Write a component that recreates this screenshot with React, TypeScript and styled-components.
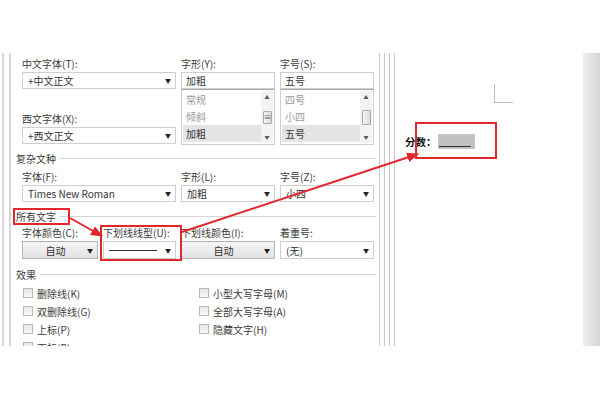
import styled, { createGlobalStyle } from "styled-components";

const GlobalStyle = createGlobalStyle`
  html, body {
    margin: 0;
    padding: 0;
    background: #fff;
  }
  body {
    font-family: "Noto Sans CJK SC", "Noto Sans", sans-serif;
    color: #333;
  }
`;

const TOP_FIELDS = { weights: ["常规", "倾斜", "加粗"], sizes: ["四号", "小四", "五号"] };

const LEFT_EFFECTS = ["删除线(K)", "双删除线(G)", "上标(P)", "下标(B)"];
const RIGHT_EFFECTS = ["小型大写字母(M)", "全部大写字母(A)", "隐藏文字(H)"];

function Arrow() {
  return <Caret>▼</Caret>;
}

function ListBox({ items, grip }: { items: string[]; grip?: boolean }) {
  return (
    <List>
      <Items>
        {items.map((item, i) => (
          <Item key={item} $selected={i === items.length - 1}>
            {item}
          </Item>
        ))}
      </Items>
      <ScrollBar>
        <ScrollArrow>▲</ScrollArrow>
        <Thumb $tall={!grip}>{grip && "≡"}</Thumb>
        <ScrollArrow>▼</ScrollArrow>
      </ScrollBar>
    </List>
  );
}

function Heading({ children, gap }: { children: string; gap: number }) {
  return (
    <SectionHead $gap={gap}>
      <span>{children}</span>
      <Rule />
    </SectionHead>
  );
}

export default function App() {
  return (
    <Page>
      <GlobalStyle />
      <Window>
        <EdgeRail />
        <Panel>
          <TopGrid>
            <Stack>
              <Label>中文字体(T):</Label>
              <Combo>
                <span>+中文正文</span>
                <Arrow />
              </Combo>
              <Label $gap={23}>西文字体(X):</Label>
              <Combo>
                <span>+西文正文</span>
                <Arrow />
              </Combo>
            </Stack>
            <Stack>
              <Label>字形(Y):</Label>
              <Input>加粗</Input>
              <ListBox items={TOP_FIELDS.weights} grip />
            </Stack>
            <Stack>
              <Label>字号(S):</Label>
              <Input>五号</Input>
              <ListBox items={TOP_FIELDS.sizes} />
            </Stack>
          </TopGrid>

          <Heading gap={7}>复杂文种</Heading>
          <ThreeGrid>
            <Stack>
              <Label $gap={6}>字体(F):</Label>
              <Combo>
                <span>Times New Roman</span>
                <Arrow />
              </Combo>
            </Stack>
            <Stack>
              <Label $gap={6}>字形(L):</Label>
              <Combo>
                <span>加粗</span>
                <Arrow />
              </Combo>
            </Stack>
            <Stack>
              <Label $gap={6}>字号(Z):</Label>
              <Combo>
                <span>小四</span>
                <Arrow />
              </Combo>
            </Stack>
          </ThreeGrid>

          <Heading gap={8}>所有文字</Heading>
          <FourGrid>
            <Stack>
              <Label>字体颜色(C):</Label>
              <Combo $button $tall>
                <Centered>自动</Centered>
                <Arrow />
              </Combo>
            </Stack>
            <Stack>
              <Label>下划线线型(U):</Label>
              <Combo $tall>
                <LineSample />
                <Arrow />
              </Combo>
            </Stack>
            <Stack>
              <Label>下划线颜色(I):</Label>
              <Combo $button $tall>
                <Centered>自动</Centered>
                <Arrow />
              </Combo>
            </Stack>
            <Stack>
              <Label>着重号:</Label>
              <Combo $tall>
                <span>(无)</span>
                <Arrow />
              </Combo>
            </Stack>
          </FourGrid>

          <Heading gap={9}>效果</Heading>
          <Effects>
            <Stack>
              {LEFT_EFFECTS.map((t) => (
                <Check key={t}>
                  <Box />
                  <span>{t}</span>
                </Check>
              ))}
            </Stack>
            <Stack>
              {RIGHT_EFFECTS.map((t) => (
                <Check key={t}>
                  <Box />
                  <span>{t}</span>
                </Check>
              ))}
            </Stack>
          </Effects>
        </Panel>
        <Divider>
          <DivLine />
          <DivLine />
          <DivLine />
          <DivLine />
        </Divider>
        <DocArea>
          <CornerMark />
          <ScoreLine>
            <strong>分数：</strong>
            <Blank>
              <BlankLine />
            </Blank>
          </ScoreLine>
        </DocArea>
        <Shade />
      </Window>

      <Overlay width="600" height="400" viewBox="0 0 600 400">
        <defs>
          <marker
            id="head"
            markerUnits="userSpaceOnUse"
            markerWidth="12"
            markerHeight="10"
            refX="11"
            refY="5"
            orient="auto"
          >
            <path d="M0,0 L12,5 L0,10 z" fill="#e1262c" />
          </marker>
        </defs>
        <g fill="none" stroke="#e1262c" strokeWidth="2">
          <rect x="14" y="209" width="55" height="15" />
          <rect x="101" y="226" width="80" height="34" />
          <rect x="416" y="123" width="80" height="35" />
          <line x1="70" y1="218" x2="102" y2="236" markerEnd="url(#head)" />
          <line x1="182" y1="232" x2="418" y2="154" markerEnd="url(#head)" />
        </g>
      </Overlay>
    </Page>
  );
}

const Page = styled.div`
  position: relative;
  width: 600px;
  height: 400px;
  padding-top: 53px;
  box-sizing: border-box;
  overflow: hidden;
  background: #fff;
`;

const Window = styled.div`
  display: flex;
  height: 293px;
  overflow: hidden;
`;

const EdgeRail = styled.div`
  flex: none;
  width: 5px;
  margin-left: 2px;
  border-left: 2px solid #d6d6d6;
  border-right: 2px solid #d6d6d6;
  margin-right: 2px;
`;

const Panel = styled.div`
  flex: none;
  width: 357px;
  padding-left: 9px;
  background: #fff;
  font-size: 10px;
  overflow: hidden;
`;

const TopGrid = styled.div`
  display: grid;
  grid-template-columns: 154px 94px 94px;
  column-gap: 5px;
  align-items: start;
`;

const ThreeGrid = styled(TopGrid)``;

const FourGrid = styled.div`
  display: grid;
  grid-template-columns: 76px 73px 94px 94px;
  column-gap: 5px;
`;

const Stack = styled.div`
  display: flex;
  flex-direction: column;
`;

const Label = styled.div<{ $gap?: number }>`
  height: 13px;
  line-height: 13px;
  margin-top: ${({ $gap }) => $gap ?? 4}px;
  margin-bottom: 2px;
  white-space: nowrap;
  color: #3a3a3a;
`;

const Combo = styled.div<{ $button?: boolean; $tall?: boolean }>`
  display: flex;
  align-items: center;
  justify-content: space-between;
  gap: 4px;
  height: ${({ $tall }) => ($tall ? 18 : 17)}px;
  box-sizing: border-box;
  padding: 0 4px 0 5px;
  border: 1px solid ${({ $button }) => ($button ? "#b3b3b3" : "#cfcfcf")};
  background: ${({ $button }) =>
    $button ? "linear-gradient(#f6f6f6, #e2e2e2)" : "#fff"};
  color: #333;
  white-space: nowrap;
`;

const Centered = styled.span`
  flex: 1;
  text-align: center;
`;

const Caret = styled.span`
  font-size: 6px;
  color: #222;
`;

const LineSample = styled.span`
  flex: 1;
  height: 1px;
  background: #333;
  margin-right: 4px;
`;

const Input = styled.div`
  height: 17px;
  line-height: 15px;
  box-sizing: border-box;
  padding-left: 4px;
  border: 1px solid #cfcfcf;
  background: #fff;
  color: #333;
`;

const List = styled.div`
  display: flex;
  height: 56px;
  box-sizing: border-box;
  border: 1px solid #cfcfcf;
  border-top-color: #a8a8a8;
  padding: 1px;
`;

const Items = styled.div`
  flex: 1;
  display: flex;
  flex-direction: column;
`;

const Item = styled.div<{ $selected?: boolean }>`
  height: 17px;
  line-height: 17px;
  padding-left: 3px;
  color: ${({ $selected }) => ($selected ? "#333" : "#9a9a9a")};
  background: ${({ $selected }) => ($selected ? "#e4e4e4" : "transparent")};
`;

const ScrollBar = styled.div`
  flex: none;
  width: 12px;
  display: flex;
  flex-direction: column;
  align-items: center;
  justify-content: space-between;
  background: #f3f3f3;
`;

const ScrollArrow = styled.span`
  font-size: 5px;
  line-height: 12px;
  color: #555;
`;

const Thumb = styled.div<{ $tall?: boolean }>`
  width: 9px;
  height: ${({ $tall }) => ($tall ? 15 : 13)}px;
  box-sizing: border-box;
  border: 1px solid #a9a9a9;
  border-radius: 1px;
  background: linear-gradient(to right, #f4f4f4, #dcdcdc);
  font-size: 8px;
  line-height: 10px;
  text-align: center;
  color: #666;
`;

const SectionHead = styled.div<{ $gap: number }>`
  display: flex;
  align-items: center;
  gap: 4px;
  height: 12px;
  margin: ${({ $gap }) => $gap}px 3px 0 -6px;
  color: #3a3a3a;
`;

const Rule = styled.div`
  flex: 1;
  height: 1px;
  background: #d4d4d4;
`;

const Effects = styled.div`
  display: grid;
  grid-template-columns: 176px 1fr;
  margin-top: 4px;
  padding-left: 1px;
`;

const Check = styled.div`
  display: flex;
  align-items: center;
  gap: 4px;
  height: 18px;
  color: #3a3a3a;
  white-space: nowrap;
`;

const Box = styled.span`
  width: 10px;
  height: 10px;
  box-sizing: border-box;
  border: 1px solid #b8b8b8;
  background: linear-gradient(#e6e6e6, #fafafa);
`;

const Divider = styled.div`
  flex: none;
  display: flex;
  gap: 4px;
  padding-right: 1px;
`;

const DivLine = styled.div`
  width: 1px;
  background: #c9c9c9;
`;

const DocArea = styled.div`
  flex: 1;
  display: flex;
  flex-direction: column;
  padding-left: 9px;
  background: #fff;
`;

const CornerMark = styled.div`
  width: 18px;
  height: 18px;
  margin: 31px 0 0 89px;
  border-left: 1px solid #bdbdbd;
  border-bottom: 1px solid #bdbdbd;
`;

const ScoreLine = styled.div`
  display: flex;
  align-items: center;
  margin-top: 31px;
  font-size: 10.5px;
  color: #111;
  gap: 1px;
`;

const Blank = styled.div`
  width: 37px;
  height: 15px;
  display: flex;
  align-items: flex-end;
  padding: 0 4px 2px 1px;
  box-sizing: border-box;
  background: #c2c2c2;
`;

const BlankLine = styled.div`
  flex: 1;
  height: 1px;
  background: #333;
`;

const Shade = styled.div`
  flex: none;
  width: 17px;
  background: linear-gradient(to right, #eeeeee, #d6d6d6);
`;

const Overlay = styled.svg`
  position: absolute;
  top: 0;
  left: 0;
  pointer-events: none;
`;
